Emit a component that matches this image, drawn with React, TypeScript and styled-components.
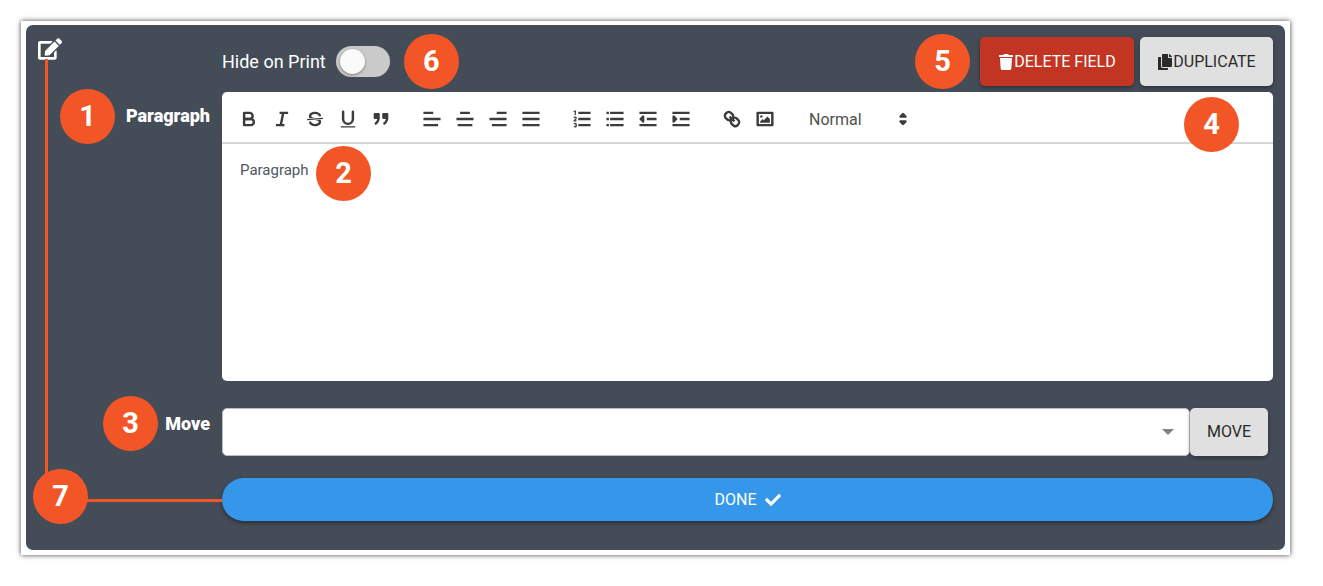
import React from "react";
import styled, { createGlobalStyle, css } from "styled-components";
import { FaCheck, FaCopy, FaEdit, FaTrash } from "react-icons/fa";

const GlobalStyle = createGlobalStyle`
  *, *::before, *::after { box-sizing: border-box; }
  body { margin: 0; background: #fff; font-family: Roboto, "Liberation Sans", sans-serif; }
  button, select, textarea, input { font-family: inherit; margin: 0; }
`;

const Page = styled.main`
  padding: 21px 33px 31px 21px;
`;

const Frame = styled.div`
  padding: 4px 5px 5px;
  background: #fff;
  box-shadow: 0 0 5px rgba(0, 0, 0, 0.75);
`;

const Panel = styled.section`
  position: relative;
  display: grid;
  grid-template-columns: 172px 1fr;
  column-gap: 12px;
  padding: 12px 12px 29px;
  border-radius: 7px;
  background: #444c58;
  color: #fff;
`;

const IconButton = styled.button`
  justify-self: start;
  align-self: start;
  display: flex;
  padding: 0;
  border: 0;
  background: none;
  color: #fff;
  font-size: 24px;
`;

const Header = styled.div`
  display: flex;
  align-items: center;
  height: 49px;
  margin-bottom: 6px;
`;

const SwitchLabel = styled.label`
  display: flex;
  align-items: center;
  gap: 10px;
  margin-right: 14px;
  font-size: 18px;
  line-height: 24px;
`;

const Switch = styled.input`
  appearance: none;
  display: flex;
  align-items: center;
  width: 54px;
  height: 31px;
  padding: 0 4px;
  border-radius: 16px;
  background: #cacaca;

  &::before {
    content: "";
    width: 25px;
    height: 25px;
    border-radius: 50%;
    background: #fafafa;
    box-shadow: 0 1px 3px rgba(0, 0, 0, 0.4);
  }

  &:checked {
    justify-content: flex-end;
    background: #3497ea;
  }
`;

const Actions = styled.div`
  display: flex;
  align-items: center;
  gap: 6px;
  margin-left: auto;
`;

const Button = styled.button<{ $tone?: "danger" | "plain"; $width: number }>`
  display: flex;
  align-items: center;
  justify-content: center;
  width: ${(p) => p.$width}px;
  height: 49px;
  padding: 0;
  border: 0;
  border-radius: 5px;
  font-size: 16px;
  line-height: 20px;
  box-shadow: 0 2px 4px rgba(0, 0, 0, 0.35);
  ${(p) =>
    p.$tone === "danger"
      ? css`
          background: #c23522;
          color: #fff;
        `
      : css`
          background: #e0e0e0;
          color: #2a2a2a;
        `}
`;

const FieldLabel = styled.label<{ $padTop: number }>`
  justify-self: end;
  padding-top: ${(p) => p.$padTop}px;
  font-size: 18px;
  line-height: 24px;
  font-weight: 900;
`;

const Editor = styled.div`
  position: relative;
  margin-bottom: 27px;
  border-radius: 5px;
  background: #fff;
  color: #3a3a3a;
`;

const Toolbar = styled.div`
  display: flex;
  align-items: center;
  gap: 18px;
  height: 52px;
  padding: 4px 10px 0;
  border-bottom: 2px solid #d6d6d6;
`;

const ToolGroup = styled.div`
  display: flex;
`;

const ToolButton = styled.button`
  display: flex;
  align-items: center;
  justify-content: center;
  width: 33px;
  height: 32px;
  padding: 0;
  border: 0;
  background: none;
`;

const Glyph = styled.svg`
  width: 22px;
  height: 22px;
  fill: none;
  stroke: #3c3c3c;
  stroke-width: 2;
  stroke-linejoin: round;

  .solid { fill: #3c3c3c; }
  .flat { fill: #3c3c3c; stroke: none; }
  .thin { stroke-width: 1; }
`;

const Picker = styled.div`
  display: flex;
  align-items: center;

  select {
    appearance: none;
    width: 93px;
    height: 32px;
    padding: 0 0 0 10px;
    border: 0;
    background: none;
    color: #505050;
    font-size: 16px;
  }
`;

const TextArea = styled.textarea`
  display: block;
  width: 100%;
  height: 237px;
  padding: 16px 18px;
  border: 0;
  background: none;
  color: #505762;
  font-size: 15px;
  line-height: 20px;
  resize: none;
`;

const MoveRow = styled.div`
  display: flex;
  height: 48px;
  margin: 0 5px 22px 0;

  > button { height: 48px; }
`;

const SelectBox = styled.div`
  display: flex;
  align-items: center;
  flex: 1;
  padding-right: 15px;
  border: 1px solid #b9bdc3;
  border-radius: 5px;
  background: #fff;

  select {
    appearance: none;
    flex: 1;
    height: 46px;
    border: 0;
    background: none;
    font-size: 16px;
  }
`;

const Caret = styled.span`
  border: 6px solid transparent;
  border-top-color: #808080;
  border-bottom: 0;
`;

const DoneButton = styled.button`
  grid-column: 2;
  display: flex;
  align-items: center;
  justify-content: center;
  gap: 8px;
  height: 43px;
  border: 0;
  border-radius: 22px;
  background: #3497ea;
  color: #fff;
  font-size: 16px;
  line-height: 20px;
  box-shadow: 0 2px 4px rgba(0, 0, 0, 0.4);
`;

const Badge = styled.span`
  display: flex;
  align-items: center;
  justify-content: center;
  flex: none;
  width: 55px;
  height: 55px;
  padding-bottom: 2px;
  border-radius: 50%;
  background: #f25627;
  color: #fff;
  font-size: 29px;
  line-height: 32px;
  font-weight: 700;

  ${Actions} > & { margin-right: 4px; }
`;

const Pinned = styled(Badge)<{ $top?: number; $left?: number; $right?: number; $bottom?: number }>`
  position: absolute;
  top: ${(p) => (p.$top === undefined ? "auto" : `${p.$top}px`)};
  left: ${(p) => (p.$left === undefined ? "auto" : `${p.$left}px`)};
  right: ${(p) => (p.$right === undefined ? "auto" : `${p.$right}px`)};
  bottom: ${(p) => (p.$bottom === undefined ? "auto" : `${p.$bottom}px`)};
`;

const Connector = styled.span`
  position: absolute;
  top: 34px;
  bottom: 48px;
  left: 19px;
  width: 177px;
  border: solid #f25627;
  border-width: 0 0 3px 3px;
  pointer-events: none;
`;

const tools: { name: string; art: React.ReactNode }[][] = [
  [
    {
      name: "Bold",
      art: (
        <>
          <path d="M5,4H9.5A2.5,2.5,0,0,1,12,6.5v0A2.5,2.5,0,0,1,9.5,9H5V4Z" />
          <path d="M5,9h5.5A2.5,2.5,0,0,1,13,11.5v0A2.5,2.5,0,0,1,10.5,14H5V9Z" />
        </>
      ),
    },
    { name: "Italic", art: <path d="M7 4h7M4 14h7M8 14L10 4" /> },
    {
      name: "Strike",
      art: (
        <>
          <path className="thin" d="M15.5 8.5L2.5 9.5" />
          <path className="flat" d="M9.007,8C6.542,7.791,6,7.519,6,6.5,6,5.792,7.283,5,9,5c1.571,0,2.765.679,2.969,1.309a1,1,0,0,0,1.9-.617C13.356,4.106,11.354,3,9,3,6.2,3,4,4.538,4,6.5a3.2,3.2,0,0,0,.5,1.843Z" />
          <path className="flat" d="M8.984,10C11.457,10.208,12,10.479,12,11.5c0,0.708-1.283,1.5-3,1.5-1.571,0-2.765-.679-2.969-1.309a1,1,0,1,0-1.9.617C4.644,13.894,6.646,15,9,15c2.8,0,5-1.538,5-3.5a3.2,3.2,0,0,0-.5-1.843Z" />
        </>
      ),
    },
    {
      name: "Underline",
      art: (
        <>
          <path strokeLinecap="round" d="M5,3V9a4.012,4.012,0,0,0,4,4H9a4.012,4.012,0,0,0,4-4V3" />
          <rect className="flat" height="1" width="12" rx="0.5" x="3" y="15" />
        </>
      ),
    },
    {
      name: "Quote",
      art: (
        <>
          <rect className="solid" height="3" width="3" x="4" y="5" />
          <rect className="solid" height="3" width="3" x="11" y="5" />
          <path className="solid" d="M7,8c0,4.031-3,5-3,5" />
          <path className="solid" d="M14,8c0,4.031-3,5-3,5" />
        </>
      ),
    },
  ],
  [
    { name: "Align left", art: <path d="M2 4h8M2 9h14M2 14h12" /> },
    { name: "Align center", art: <path d="M5 4h8M2 9h14M3 14h12" /> },
    { name: "Align right", art: <path d="M8 4h8M2 9h14M4 14h12" /> },
    { name: "Justify", art: <path d="M2 4h14M2 9h14M2 14h14" /> },
  ],
  [
    {
      name: "Numbered list",
      art: (
        <>
          <path d="M6 4h10M6 9h10M6 14h10" />
          <path className="flat" d="M3.5,6A0.5,0.5,0,0,1,3,5.5V3.085l-0.276.138A0.5,0.5,0,0,1,2.053,3c-0.124-.247-0.023-0.324.224-0.447l1-.5A0.5,0.5,0,0,1,4,2.5v3A0.5,0.5,0,0,1,3.5,6Z" />
          <path className="thin" d="M4.5,10.5h-2c0-.234,1.85-1.076,1.85-2.234A0.959,0.959,0,0,0,2.5,8.156" />
          <path className="thin" d="M2.5,14.846a0.959,0.959,0,0,0,1.85-.109A0.7,0.7,0,0,0,3.75,14a0.688,0.688,0,0,0,.6-0.736,0.959,0.959,0,0,0-1.85-.109" />
        </>
      ),
    },
    {
      name: "Bullet list",
      art: <path d="M5 4h11M5 9h11M5 14h11M2 4h2M2 9h2M2 14h2" />,
    },
    {
      name: "Outdent",
      art: (
        <>
          <path d="M2 4h14M8 9h8M2 14h14" />
          <path className="solid" d="M5 7V11L3 9Z" />
        </>
      ),
    },
    {
      name: "Indent",
      art: (
        <>
          <path d="M2 4h14M8 9h8M2 14h14" />
          <path className="solid" d="M3 7V11L5 9Z" />
        </>
      ),
    },
  ],
  [
    {
      name: "Link",
      art: (
        <>
          <path d="M7 7L11 11" />
          <path d="M8.9,4.577a3.476,3.476,0,0,1,.36,4.679A3.476,3.476,0,0,1,4.577,8.9C3.185,7.5,2.035,6.4,4.217,4.217S7.5,3.185,8.9,4.577Z" />
          <path d="M13.423,9.1a3.476,3.476,0,0,0-4.679-.36,3.476,3.476,0,0,0,.36,4.679c1.392,1.392,2.5,2.542,4.679.36S14.815,10.5,13.423,9.1Z" />
        </>
      ),
    },
    {
      name: "Image",
      art: (
        <>
          <rect height="10" width="12" x="3" y="4" />
          <circle className="flat" cx="6" cy="7" r="1" />
          <path className="flat" d="M5 12V11L7 9L8 10L11 7L13 9V12Z" />
        </>
      ),
    },
  ],
];

export default function App() {
  return (
    <Page>
      <GlobalStyle />
      <Frame>
        <Panel>
          <Connector />
          <IconButton aria-label="Edit field">
            <FaEdit />
          </IconButton>
          <Header>
            <SwitchLabel>
              Hide on Print
              <Switch type="checkbox" role="switch" />
            </SwitchLabel>
            <Badge>6</Badge>
            <Actions>
              <Badge>5</Badge>
              <Button $tone="danger" $width={154}>
                <FaTrash />
                DELETE FIELD
              </Button>
              <Button $width={133}>
                <FaCopy />
                DUPLICATE
              </Button>
            </Actions>
          </Header>

          <FieldLabel htmlFor="paragraph" $padTop={12}>Paragraph</FieldLabel>
          <Editor>
            <Toolbar role="toolbar" aria-label="Formatting">
              {tools.map((group, i) => (
                <ToolGroup key={i}>
                  {group.map((tool) => (
                    <ToolButton key={tool.name} aria-label={tool.name}>
                      <Glyph viewBox="0 0 18 18">{tool.art}</Glyph>
                    </ToolButton>
                  ))}
                </ToolGroup>
              ))}
              <Picker>
                <select aria-label="Text style">
                  <option>Normal</option>
                </select>
                <Glyph viewBox="0 0 18 18">
                  <path className="solid" d="M7 11L9 13L11 11Z" />
                  <path className="solid" d="M7 7L9 5L11 7Z" />
                </Glyph>
              </Picker>
            </Toolbar>
            <TextArea id="paragraph" defaultValue="Paragraph" spellCheck={false} />
            <Pinned $top={54} $left={94}>2</Pinned>
            <Pinned $top={5} $right={34}>4</Pinned>
          </Editor>

          <FieldLabel htmlFor="move" $padTop={4}>Move</FieldLabel>
          <MoveRow>
            <SelectBox>
              <select id="move" />
              <Caret />
            </SelectBox>
            <Button $width={78}>MOVE</Button>
          </MoveRow>

          <DoneButton>
            DONE <FaCheck />
          </DoneButton>

          <Pinned $top={64} $left={34}>1</Pinned>
          <Pinned $top={371} $left={77}>3</Pinned>
          <Pinned $bottom={26} $left={7}>7</Pinned>
        </Panel>
      </Frame>
    </Page>
  );
}
